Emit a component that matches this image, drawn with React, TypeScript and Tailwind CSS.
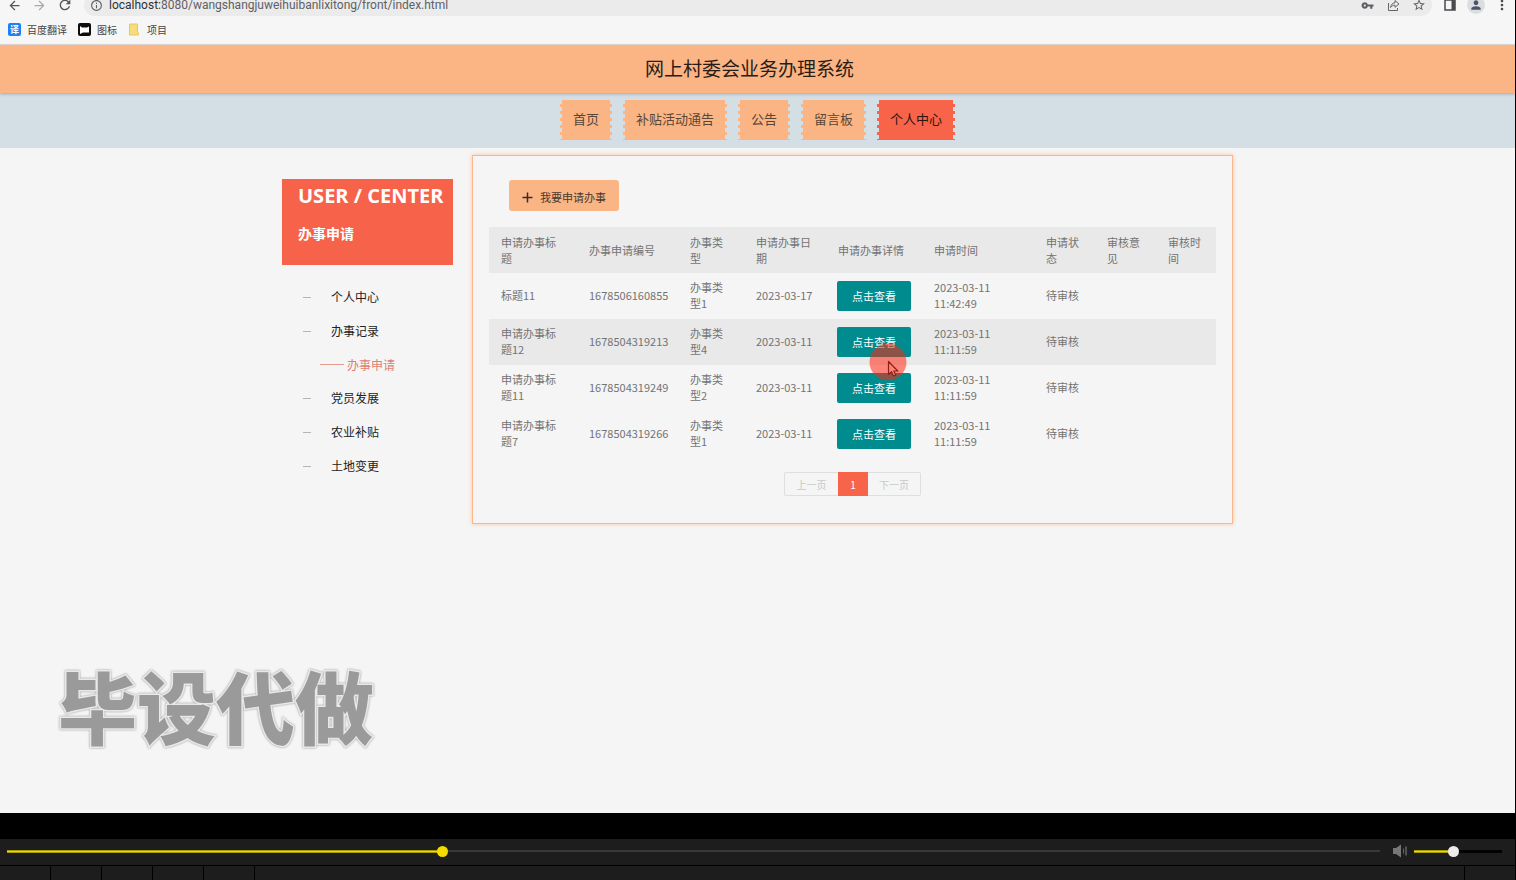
import { useState } from "react";
import {
  MdArrowBack,
  MdArrowForward,
  MdInfoOutline,
  MdMoreVert,
  MdPerson,
  MdRefresh,
  MdStarBorder,
  MdVpnKey,
} from "react-icons/md";

const navItems = ["首页", "补贴活动通告", "公告", "留言板", "个人中心"];

const menu = [
  { label: "个人中心" },
  { label: "办事记录" },
  { label: "办事申请", sub: true },
  { label: "党员发展" },
  { label: "农业补贴" },
  { label: "土地变更" },
];

const columns = [
  { label: "申请办事标题", width: "w-[88px]" },
  { label: "办事申请编号", width: "w-[101px]" },
  { label: "办事类型", width: "w-[66px]" },
  { label: "申请办事日期", width: "w-[82px]" },
  { label: "申请办事详情", width: "w-[96px]" },
  { label: "申请时间", width: "w-[112px]" },
  { label: "申请状态", width: "w-[61px]" },
  { label: "审核意见", width: "w-[61px]" },
  { label: "审核时间", width: "w-[60px]" },
];

const rows = [
  { title: "标题11", no: "1678506160855", type: "办事类型1", date: "2023-03-17", time: "2023-03-11 11:42:49" },
  { title: "申请办事标题12", no: "1678504319213", type: "办事类型4", date: "2023-03-11", time: "2023-03-11 11:11:59", active: true },
  { title: "申请办事标题11", no: "1678504319249", type: "办事类型2", date: "2023-03-11", time: "2023-03-11 11:11:59" },
  { title: "申请办事标题7", no: "1678504319266", type: "办事类型1", date: "2023-03-11", time: "2023-03-11 11:11:59" },
];

function ShareIcon() {
  return (
    <svg width="13" height="13" viewBox="0 0 13 13" fill="none" stroke="#666" strokeWidth="1">
      <path d="M1.5 4v7.500h9V9" />
      <path d="M3.500 8.500C4 5.500 5.500 4 8 3.800V1.500L12 5 8 8.300V6.200C6 6.200 4.700 7 3.500 8.500z" strokeLinejoin="round" />
    </svg>
  );
}

function SidePanelIcon() {
  return (
    <svg width="12" height="12" viewBox="0 0 12 12">
      <path d="M1 1h10v10H1z" fill="none" stroke="#4a4a4e" strokeWidth="1.500" />
      <path d="M7.500 1H11v10H7.500z" fill="#4a4a4e" />
    </svg>
  );
}

function BrowserBar() {
  return (
    <div className="bg-[#f7f6f7] h-[45px] shrink-0 border-b border-[#e6dedb]">
      <div className="h-4 overflow-hidden flex items-end">
        <div className="flex h-[22px] w-[84px] pl-[2px] shrink-0 text-[#55565a]">
          <button aria-label="back" className="w-[25px] flex items-center justify-center">
            <MdArrowBack size={15} />
          </button>
          <button aria-label="forward" className="w-[25px] flex items-center justify-center text-[#a9a9ab]">
            <MdArrowForward size={15} />
          </button>
          <button aria-label="reload" className="w-[25px] flex items-center justify-center">
            <MdRefresh size={16} />
          </button>
        </div>
        <div className="flex-1 h-[22px] rounded-full bg-[#ebebec] flex items-center text-[#5f6064]">
          <MdInfoOutline size={13} className="ml-[6px] mr-[6px]" />
          <p className="flex-1 text-[12px] leading-[10px] font-['Roboto','Open_Sans',sans-serif]">
            <span className="text-[#303134]">localhost:</span>8080/wangshangjuweihuibanlixitong/front/index.html
          </p>
          <button aria-label="password" className="w-[26px] flex justify-center">
            <MdVpnKey size={13} />
          </button>
          <button aria-label="share" className="w-[26px] flex justify-center">
            <ShareIcon />
          </button>
          <button aria-label="bookmark" className="w-[26px] flex justify-center">
            <MdStarBorder size={14} />
          </button>
        </div>
        <div className="flex h-[22px] pl-[5px] shrink-0 items-center text-[#4a4a4e]">
          <button aria-label="side panel" className="w-[26px] flex justify-center">
            <SidePanelIcon />
          </button>
          <button aria-label="profile" className="w-[26px] flex justify-center">
            <span className="rounded-full bg-[#dcdde1] p-[2px] text-[#4d5366]">
              <MdPerson size={14} />
            </span>
          </button>
          <button aria-label="more" className="w-[26px] flex justify-center">
            <MdMoreVert size={16} />
          </button>
        </div>
      </div>
      <div className="flex h-[27px] items-center gap-[11px] pl-2 text-[10px] text-[#444]">
        <a href="#" className="flex items-center gap-[6px]">
          <span className="w-[13px] h-[13px] rounded-[2px] bg-[#1a82f7] text-white text-[9px] font-bold flex items-center justify-center">
            译
          </span>
          百度翻译
        </a>
        <a href="#" className="flex items-center gap-[6px]">
          <svg width="13" height="13" viewBox="0 0 13 13">
            <rect width="13" height="13" rx="2" fill="#0c0c0c" />
            <path d="M2 3l2 1.500h5l2-1V9.500H5L2 11z" fill="#fff" />
          </svg>
          图标
        </a>
        <a href="#" className="flex items-center gap-2">
          <svg width="11" height="13" viewBox="0 0 11 13">
            <path d="M1.500 1h8v8l1 1v2h-9z" fill="#f6dc7c" stroke="#e8c860" strokeWidth="1" />
          </svg>
          项目
        </a>
      </div>
    </div>
  );
}

function NavItem({ label, active }: { label: string; active: boolean }) {
  // ticket style edge on both sides
  const edge = active
    ? "w-[2px] bg-[repeating-linear-gradient(to_bottom,transparent_0_4px,#f7644a_4px_7px)]"
    : "w-[2px] bg-[repeating-linear-gradient(to_bottom,transparent_0_4px,#fbb585_4px_7px)]";

  return (
    <a href="#" className="flex h-10 text-[13px]">
      <span className={edge} />
      <span
        className={
          active
            ? "flex items-center px-[11px] pb-[2px] bg-[#f7644a] text-[#2b1512]"
            : "flex items-center px-[11px] pb-[2px] bg-[#fbb585] text-[#5a4636]"
        }
      >
        {label}
      </span>
      <span className={edge} />
    </a>
  );
}

function Sidebar() {
  return (
    <aside className="w-[171px] shrink-0 pt-6">
      <div className="h-[86px] bg-[#f7624a] pl-4 text-white font-bold">
        <h2 className="text-[20px] leading-[34px] whitespace-nowrap font-['Open_Sans','Noto_Sans',sans-serif]">
          USER / CENTER
        </h2>
        <p className="text-[14px] leading-10">办事申请</p>
      </div>
      <ul className="pt-[15px] text-[12px]">
        {menu.map((item) =>
          item.sub ? (
            <li key={item.label}>
              <a href="#" className="flex h-[33px] items-center pl-[38px] text-[#dd7f73]">
                <span className="w-6 h-px mr-[3px] bg-[#e39a8f]" />
                {item.label}
              </a>
            </li>
          ) : (
            <li key={item.label}>
              <a href="#" className="flex h-[34px] items-center pl-[21px] text-[#222]">
                <span className="w-2 h-px mr-5 bg-[#b5b5b5]" />
                {item.label}
              </a>
            </li>
          )
        )}
      </ul>
    </aside>
  );
}

function ApplyTable() {
  return (
    <table className="w-full table-fixed text-left text-[11px] leading-4 text-[#737373]">
      <thead>
        <tr className="h-[46px] bg-[#e9e9e9]">
          {columns.map((c) => (
            <th key={c.label} className={`${c.width} px-3 font-normal`}>
              {c.label}
            </th>
          ))}
        </tr>
      </thead>
      <tbody>
        {rows.map((r) => (
          <tr key={r.no} className={r.active ? "h-[46px] bg-[#e9e9e9]" : "h-[46px]"}>
            <td className="px-3 pb-[2px]">{r.title}</td>
            <td className="pl-3 pb-[2px] whitespace-nowrap">{r.no}</td>
            <td className="px-3 pb-[2px]">{r.type}</td>
            <td className="pl-3 pb-[2px] whitespace-nowrap">{r.date}</td>
            <td className="pl-[11px]">
              <button className="block h-[30px] w-[74px] rounded-[2px] bg-[#008b8f] text-white">点击查看</button>
            </td>
            <td className="pl-3 pr-8 pb-[2px]">{r.time}</td>
            <td className="px-3 pb-[2px]">待审核</td>
            <td></td>
            <td></td>
          </tr>
        ))}
      </tbody>
    </table>
  );
}

function Player() {
  const [progress, setProgress] = useState(31.6);
  const [volume, setVolume] = useState(44);

  return (
    <div className="bg-black pt-[26px] shrink-0">
      <div className="flex h-[26px] items-center bg-[#1d1d1d] pl-[7px] pr-[13px] pb-[2px]">
        <div className="relative flex flex-1 items-center h-3">
          <div className="absolute inset-x-0 h-[2px] bg-[#393939]" />
          <div
            className="absolute left-0 h-[3px] bg-[#f0dc00] border-y border-[#a89b00]"
            style={{ width: `${progress}%` }}
          />
          <input
            type="range"
            aria-label="progress"
            min={0}
            max={100}
            step={0.1}
            value={progress}
            onChange={(e) => setProgress(Number(e.target.value))}
            className="relative w-full h-3 appearance-none bg-transparent [&::-webkit-slider-thumb]:appearance-none [&::-webkit-slider-thumb]:w-[11px] [&::-webkit-slider-thumb]:h-[11px] [&::-webkit-slider-thumb]:rounded-full [&::-webkit-slider-thumb]:bg-[#f5dc00]"
          />
        </div>
        <button aria-label="mute" className="ml-3 mr-[7px]">
          <svg width="15" height="14" viewBox="0 0 15 14">
            <path d="M1 4h3l5-3.500v13L4 10H1z" fill="#777" />
            <path d="M11.500 4.500v5" stroke="#666" strokeWidth="1" />
            <path d="M14 2.500v9" stroke="#888" strokeWidth="1" />
          </svg>
        </button>
        <div className="relative flex w-[88px] items-center h-3">
          <div className="absolute inset-x-0 h-[3px] bg-[#020202]" />
          <div
            className="absolute left-0 h-[3px] bg-[#f0dc00] border-y border-[#a89b00]"
            style={{ width: `${volume}%` }}
          />
          <input
            type="range"
            aria-label="volume"
            min={0}
            max={100}
            value={volume}
            onChange={(e) => setVolume(Number(e.target.value))}
            className="relative w-full h-3 appearance-none bg-transparent [&::-webkit-slider-thumb]:appearance-none [&::-webkit-slider-thumb]:w-[11px] [&::-webkit-slider-thumb]:h-[11px] [&::-webkit-slider-thumb]:rounded-full [&::-webkit-slider-thumb]:bg-[#ececec]"
          />
        </div>
      </div>
      <div className="mt-px flex h-[14px] bg-[#1d1d1d]">
        {[1, 2, 3, 4, 5].map((n) => (
          <div key={n} className="w-[51px] border-r border-black" />
        ))}
        <div className="flex-1 border-r border-black" />
        <div className="w-[50px]" />
      </div>
    </div>
  );
}

export default function App() {
  return (
    <div className="flex min-h-screen flex-col bg-[#f5f5f5] border-r border-black font-['Noto_Sans_CJK_SC',sans-serif]">
      <BrowserBar />
      <header className="relative h-12 shrink-0 bg-[#fbb585] pr-4 pb-[2px] flex items-center justify-center shadow-[0_1px_3px_rgba(0,0,0,0.25)]">
        <h1 className="text-[19px] text-[#2a1c14]">网上村委会业务办理系统</h1>
      </header>
      <nav className="h-[55px] shrink-0 bg-[#d3dee5] pt-[7px] flex items-start justify-center gap-[11px]">
        {navItems.map((label) => (
          <NavItem key={label} label={label} active={label === "个人中心"} />
        ))}
      </nav>

      <main className="relative flex flex-1 items-start justify-center gap-[19px] pt-[7px]">
        <Sidebar />
        <section className="w-[761px] border border-[#fab78c] px-4 pt-6 pb-[27px] shadow-[0_0_4px_rgba(251,181,133,0.8)]">
          <button className="ml-5 mb-4 flex h-[31px] w-[110px] items-center justify-center rounded-[3px] bg-[#fbb585] pt-[3px] text-[11px] text-[#4a382c]">
            <svg width="11" height="11" viewBox="0 0 11 11" className="mr-[7px]">
              <path d="M5.500 0.500v10M0.500 5.500h10" stroke="#3a2c24" strokeWidth="1.500" />
            </svg>
            我要申请办事
          </button>
          <ApplyTable />
          <div className="mt-[15px] flex h-6 justify-center text-[10px] text-[#c8c8c8]">
            <button className="w-[54px] rounded-l-[2px] border border-r-0 border-[#dfdfdf]">上一页</button>
            <button className="w-[30px] bg-[#f7644a] text-white">1</button>
            <button className="w-[53px] rounded-r-[2px] border border-l-0 border-[#dfdfdf]">下一页</button>
          </div>
        </section>

        {/* watermark */}
        <div className="absolute left-[58px] bottom-[64px] text-[79px] leading-[88px] font-black text-[#9a9a9a] [-webkit-text-stroke:3px_#e8e8e8] [paint-order:stroke_fill] drop-shadow-[0_0_1px_#999]">
          毕设代做
        </div>

        {/* click marker and mouse pointer */}
        <svg width="38" height="38" viewBox="0 0 38 38" className="absolute left-[869px] top-[195px]">
          <circle cx="19" cy="19" r="18.500" fill="#ff2810" fillOpacity="0.550" />
          <path
            d="M19.500 18.500v13l3-2.800 2 4.300 2.300-1-2-4h4z"
            fill="#fb8473"
            stroke="#8e1f16"
            strokeWidth="1.200"
            strokeLinejoin="round"
          />
        </svg>
      </main>
      <Player />
    </div>
  );
}
